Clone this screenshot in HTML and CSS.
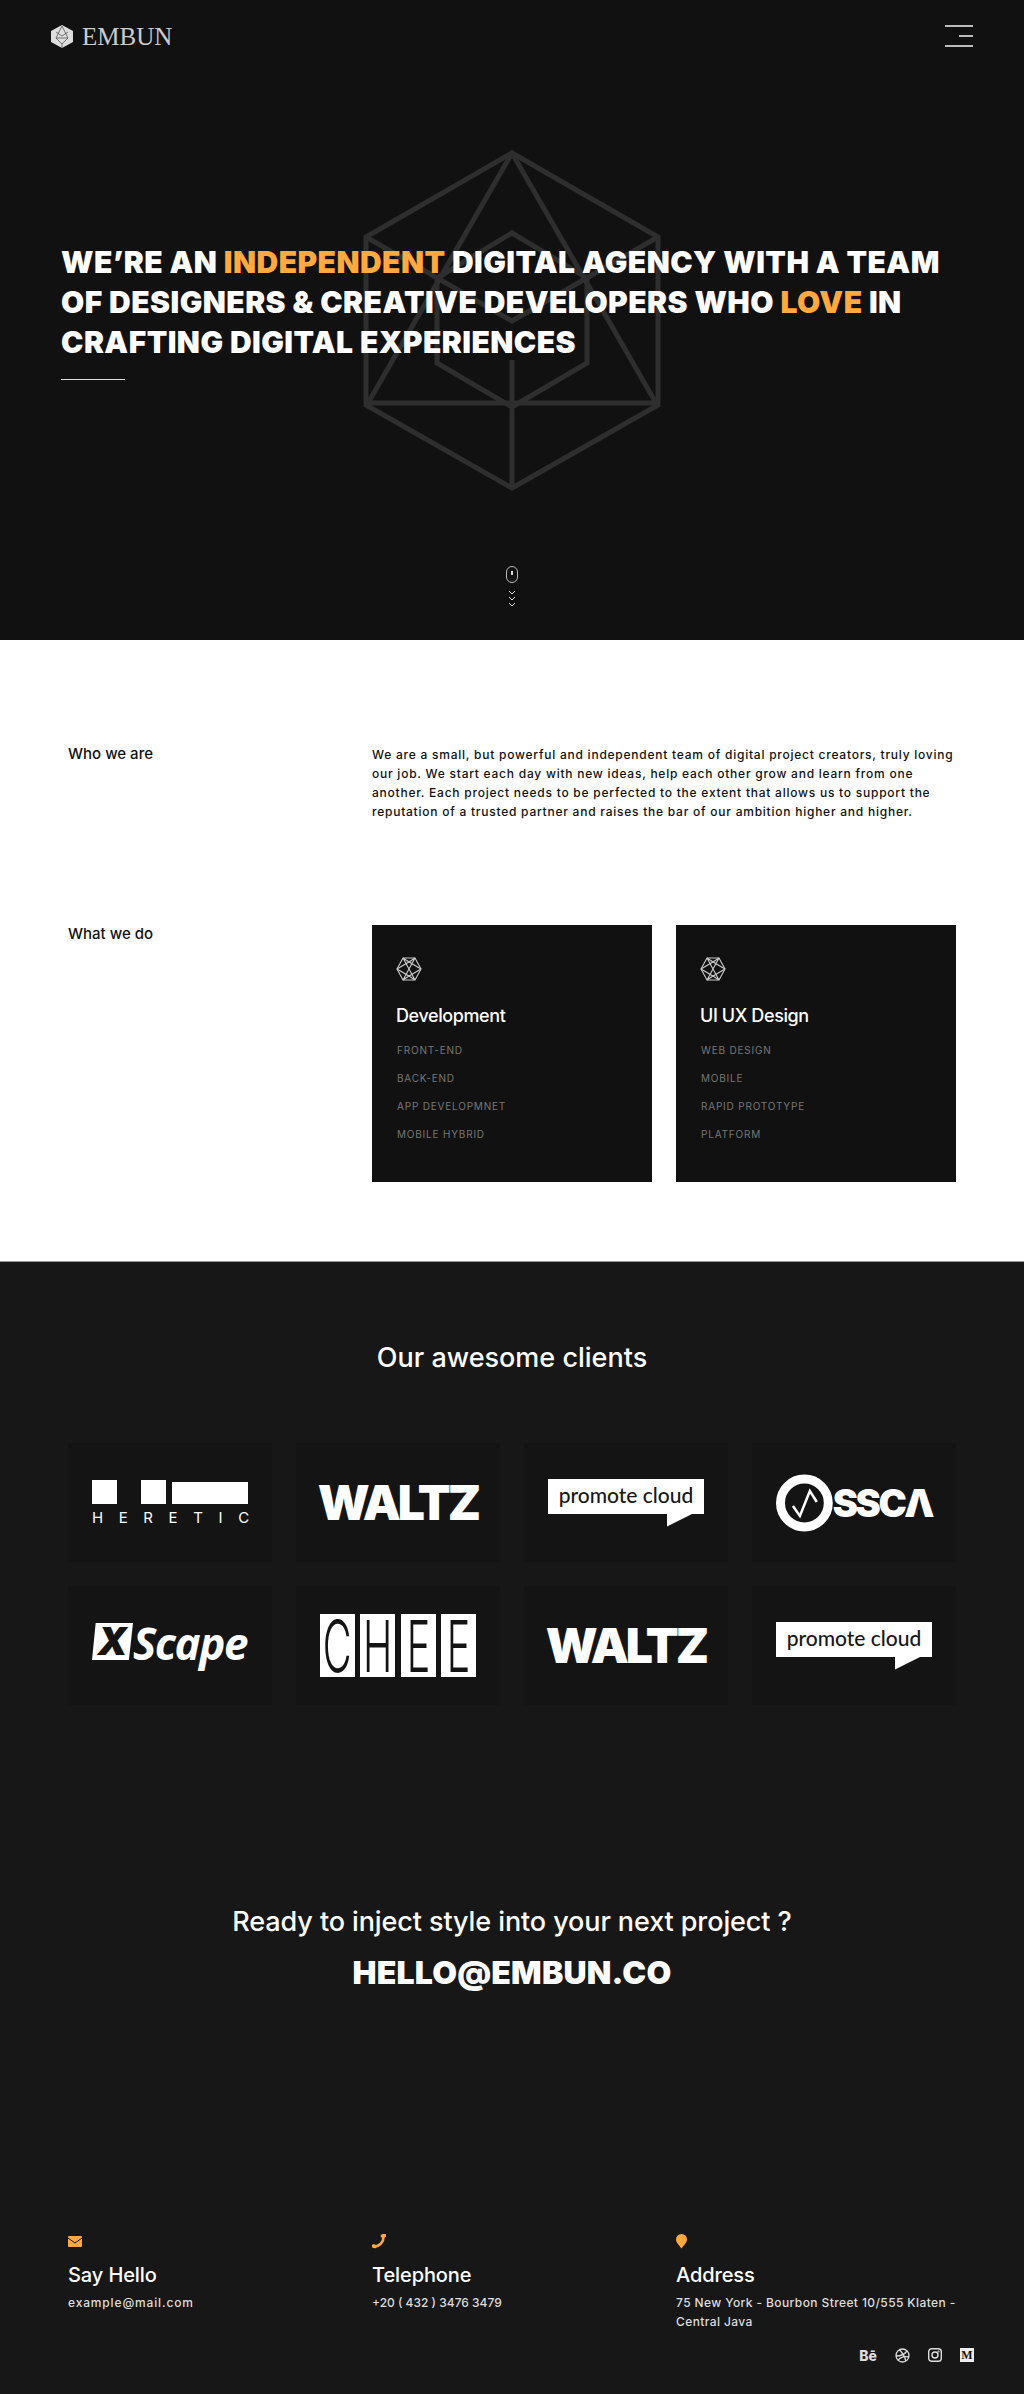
FILE: index.html
```html
<!DOCTYPE html>
<html lang="en">
<head>
    <meta charset="UTF-8">
    <meta name="viewport" content="width=device-width, initial-scale=1.0">
    <title>Embun</title>
    <link rel="stylesheet" href="styles.css">
</head>
<body>
    <section class="hero">
        <svg class="hero-mark" viewBox="0 0 298 343" fill="none" stroke="#2e2e2e" stroke-width="5">
            <path d="M149 4 295 88V256L149 339 3 256V88Z"/>
            <path d="M149 84 224 129V214L149 258 74 214V129Z"/>
            <path d="M149 4 5 254M149 4 293 254M3 254H295M149 211V339M3 88 149 172 295 88"/>
        </svg>
        <header class="topbar">
            <a class="brand">
                <svg class="brand-mark" viewBox="0 0 22 23">
                    <path d="M11 0 22 6V17L11 23 0 17V6Z" fill="#ddd"/>
                    <path d="M11 1 5 13H17ZM5 7 11 11 17 7M5 13 11 19 17 13M11 19V23" fill="none" stroke="#555" stroke-width=".8"/>
                </svg>
                <span class="brand-name">EMBUN</span>
            </a>
            <button class="menu-toggle" aria-label="Menu">
                <span></span><span class="short"></span><span></span>
            </button>
        </header>
        <h1 class="hero-title">WE’RE AN <em>INDEPENDENT</em> DIGITAL AGENCY WITH A TEAM OF DESIGNERS &amp; CREATIVE DEVELOPERS WHO <em>LOVE</em> IN CRAFTING DIGITAL EXPERIENCES</h1>
        <div class="hero-rule"></div>
        <div class="scroll-hint">
            <div class="mouse"><i></i></div>
            <svg class="chevrons" width="8" height="18" viewBox="0 0 8 18" fill="none" stroke="#ddd" stroke-width="1">
                <path d="M1 1 4 4 7 1M1 7 4 10 7 7M1 13 4 16 7 13"/>
            </svg>
        </div>
    </section>

    <section class="about">
        <div class="row who">
            <h4 class="row-label">Who we are</h4>
            <p class="who-text">We are a small, but powerful and independent team of digital project creators, truly loving our job. We start each day with new ideas, help each other grow and learn from one another. Each project needs to be perfected to the extent that allows us to support the reputation of a trusted partner and raises the bar of our ambition higher and higher.</p>
        </div>
        <div class="row what">
            <h4 class="row-label">What we do</h4>
            <div class="card">
                <svg class="card-icon" viewBox="0 0 26 24" fill="none" stroke="#ccc" stroke-width="1.1">
                    <path d="M1 12 7 1H19L25 12 19 23H7Z"/>
                    <path d="M7 1 19 23M19 1 7 23M1 12 13 5 25 12M1 12 13 19 25 12M7 1 13 5 19 1M7 23 13 19 19 23"/>
                </svg>
                <h3 class="card-title">Development</h3>
                <ul class="card-list">
                    <li>FRONT-END</li>
                    <li>BACK-END</li>
                    <li>APP DEVELOPMNET</li>
                    <li>MOBILE HYBRID</li>
                </ul>
            </div>
            <div class="card">
                <svg class="card-icon" viewBox="0 0 26 24" fill="none" stroke="#ccc" stroke-width="1.1">
                    <path d="M1 12 7 1H19L25 12 19 23H7Z"/>
                    <path d="M7 1 19 23M19 1 7 23M1 12 13 5 25 12M1 12 13 19 25 12M7 1 13 5 19 1M7 23 13 19 19 23"/>
                </svg>
                <h3 class="card-title">UI UX Design</h3>
                <ul class="card-list">
                    <li>WEB DESIGN</li>
                    <li>MOBILE</li>
                    <li>RAPID PROTOTYPE</li>
                    <li>PLATFORM</li>
                </ul>
            </div>
        </div>
    </section>

    <section class="dark">
        <h2 class="clients-title">Our awesome clients</h2>
        <div class="clients">
            <div class="tile">
                <div class="logo-heretic">
                    <div class="heretic-blocks"><i></i><i></i><i class="wide"></i></div>
                    <span>HERETIC</span>
                </div>
            </div>
            <div class="tile"><span class="logo-waltz">WALTZ</span></div>
            <div class="tile"><div class="logo-promote"><span>promote cloud</span></div></div>
            <div class="tile">
                <div class="logo-ossca">
                    <svg width="57" height="58" viewBox="0 0 57 58" fill="none" stroke="#fff">
                        <circle cx="28.5" cy="29" r="24" stroke-width="9"/>
                        <path d="M17 32 24 42 34 17 41 28" stroke-width="2.5"/>
                    </svg>
                    <span>SSCΛ</span>
                </div>
            </div>
            <div class="tile">
                <div class="logo-xscape"><span class="x-box">X</span><span class="x-word">Scape</span></div>
            </div>
            <div class="tile">
                <div class="logo-chee">
                    <span><i>C</i></span><span><i>H</i></span><span><i>E</i></span><span><i>E</i></span>
                </div>
            </div>
            <div class="tile"><span class="logo-waltz">WALTZ</span></div>
            <div class="tile"><div class="logo-promote"><span>promote cloud</span></div></div>
        </div>

        <div class="cta">
            <h2 class="cta-title">Ready to inject style into your next project ?</h2>
            <a class="cta-mail">HELLO@EMBUN.CO</a>
        </div>

        <footer class="contact">
            <div class="contact-item">
                <svg class="contact-icon" width="14" height="15" viewBox="0 0 14 15">
                    <rect y="2" width="14" height="11" rx="1" fill="#ffa93f"/>
                    <path d="M0 4 7 9 14 4" fill="none" stroke="#171717" stroke-width="1"/>
                </svg>
                <h3>Say Hello</h3>
                <p class="contact-mail">example@mail.com</p>
            </div>
            <div class="contact-item">
                <svg class="contact-icon" width="14" height="15" viewBox="0 0 14 15" fill="none" stroke="#ffa93f" stroke-linecap="round">
                    <path d="M11.5 3C11.5 8 8 12 3 12.5" stroke-width="2.6"/>
                    <path d="M10.5 2 12.5 1.5M1.5 12 3 12.5" stroke-width="3.6"/>
                </svg>
                <h3>Telephone</h3>
                <p class="contact-phone">+20 ( 432 ) 3476 3479</p>
            </div>
            <div class="contact-item">
                <svg class="contact-icon" width="11" height="15" viewBox="0 0 11 15">
                    <path d="M5.5 0A5.5 5.5 0 0 1 11 5.5C11 8.5 7.5 11.5 5.5 14.5 3.5 11.5 0 8.5 0 5.5A5.5 5.5 0 0 1 5.5 0Z" fill="#ffa93f"/>
                </svg>
                <h3>Address</h3>
                <p>75 New York - Bourbon Street 10/555 Klaten - Central Java</p>
            </div>
        </footer>
        <div class="social">
            <span class="social-be">Bē</span>
            <svg width="15" height="15" viewBox="0 0 15 15" fill="none" stroke="#ddd" stroke-width="1.3">
                <circle cx="7.5" cy="7.5" r="6.5"/>
                <path d="M4.5 1.8C7.5 5 10 9.5 10.8 13M1 8C5 8 9.5 6.5 12 3M3 12.5C5 9.5 8.5 8 14 9"/>
            </svg>
            <svg width="14" height="14" viewBox="0 0 14 14" fill="none" stroke="#ddd" stroke-width="1.4">
                <rect x=".7" y=".7" width="12.6" height="12.6" rx="3"/>
                <circle cx="7" cy="7" r="3"/>
                <circle cx="10.5" cy="3.5" r=".4"/>
            </svg>
            <span class="social-m">M</span>
        </div>
    </section>
</body>
</html>
```

FILE: styles.css
```css
* {
    box-sizing: border-box;
}

body {
    font-family: 'Inter', 'Open Sans', sans-serif;
    margin: 0;
    padding: 0;
    background-color: #171717;
}

h1, h2, h3, h4, p, ul {
    margin: 0;
    padding: 0;
}

/* hero */
.hero {
    position: relative;
    display: flex;
    flex-direction: column;
    height: 640px;
    padding: 25px 51px 32px 61px;
    background-color: #111;
    color: #fff;
}

.hero-mark {
    position: absolute;
    left: 363px;
    top: 149px;
    width: 298px;
    height: 343px;
}

.topbar {
    position: relative;
    display: flex;
    justify-content: space-between;
    align-items: flex-start;
    margin-left: -10px;
}

.brand {
    display: flex;
    align-items: center;
    gap: 9px;
    height: 23px;
}

.brand-mark {
    width: 22px;
    height: 23px;
}

.brand-name {
    font-family: 'Liberation Serif', serif;
    font-size: 25px;
    color: #ccc;
}

.menu-toggle {
    display: flex;
    flex-direction: column;
    align-items: flex-end;
    gap: 8px;
    width: 28px;
    padding: 0;
    background: none;
    border: none;
}

.menu-toggle span {
    display: block;
    width: 28px;
    height: 2px;
    background-color: #bbb;
}

.menu-toggle span.short {
    width: 14px;
}

.hero-title {
    position: relative;
    margin-top: 194px;
    font-size: 30px;
    font-weight: 900;
    line-height: 40px;
    letter-spacing: 0.45px;
    width: 900px;
}

.hero-title em {
    font-style: normal;
    color: #ffa93f;
}

.hero-rule {
    position: relative;
    width: 64px;
    height: 1px;
    margin-top: 17px;
    background-color: #ddd;
}

.scroll-hint {
    display: flex;
    flex-direction: column;
    align-items: center;
    gap: 7px;
    margin-top: auto;
    margin-left: -10px;
}

.mouse {
    display: flex;
    justify-content: center;
    width: 12px;
    height: 17px;
    padding-top: 4px;
    border: 1px solid #bbb;
    border-radius: 6px;
}

.mouse i {
    width: 2px;
    height: 4px;
    background-color: #ddd;
}

/* about */
.about {
    height: 621px;
    padding: 104px 68px 0;
    background-color: #fff;
    color: #111;
}

.row {
    display: grid;
    grid-template-columns: 280px 280px 280px;
    column-gap: 24px;
}

.row-label {
    font-size: 15px;
    font-weight: 500;
    line-height: 19px;
}

.who-text {
    grid-column: 2 / 4;
    font-size: 12px;
    font-weight: 500;
    line-height: 19px;
    letter-spacing: 0.76px;
    width: 586px;
    margin-top: 1px;
}

.what {
    margin-top: 104px;
}

.what .row-label {
    margin-top: -1px;
}

.card {
    height: 257px;
    padding: 32px 24px 0;
    background-color: #111;
    color: #fff;
}

.card-icon {
    display: block;
    width: 26px;
    height: 24px;
}

.card-title {
    margin-top: 23px;
    font-size: 18px;
    font-weight: 500;
    line-height: 24px;
    letter-spacing: -0.4px;
}

.card-list {
    list-style: none;
    margin-top: 8px;
}

.card-list li {
    padding-left: 1px;
    font-size: 10px;
    line-height: 28px;
    letter-spacing: 0.8px;
    color: #777;
}

/* clients */
.dark {
    height: 1133px;
    padding: 76px 68px 0;
    background-color: #171717;
    border-top: 1px solid #999;
    color: #fff;
}

.clients-title {
    font-size: 27px;
    font-weight: 500;
    line-height: 40px;
    text-align: center;
}

.clients {
    display: grid;
    grid-template-columns: repeat(4, 204px);
    grid-auto-rows: 119px;
    gap: 24px;
    margin-top: 65px;
}

.tile {
    display: flex;
    align-items: center;
    justify-content: center;
    background-color: #141414;
}

.logo-heretic {
    width: 156px;
}

.heretic-blocks {
    display: flex;
    align-items: flex-end;
}

.heretic-blocks i {
    width: 25px;
    height: 24px;
    margin-right: 24px;
    background-color: #fff;
}

.heretic-blocks i + i {
    margin-right: 6px;
}

.heretic-blocks i.wide {
    width: 76px;
    height: 22px;
    margin: 0;
}

.logo-heretic span {
    display: block;
    margin-top: 6px;
    font-size: 15px;
    line-height: 15px;
    letter-spacing: 15.6px;
    white-space: nowrap;
}

.logo-waltz {
    font-size: 48px;
    font-weight: 900;
    line-height: 36px;
    letter-spacing: -3px;
}

.logo-promote {
    position: relative;
    width: 156px;
    height: 35px;
    margin-bottom: 13px;
    background-color: #fff;
    color: #171717;
    text-align: center;
}

.logo-promote span {
    font-family: 'Lato', sans-serif;
    font-size: 21px;
    font-weight: 500;
    line-height: 32px;
    white-space: nowrap;
}

.logo-promote::after {
    content: "";
    position: absolute;
    left: 119px;
    top: 35px;
    width: 26px;
    height: 13px;
    background-color: #fff;
    clip-path: polygon(0 0, 100% 0, 0 100%);
}

.logo-ossca {
    display: flex;
    align-items: center;
    width: 156px;
}

.logo-ossca span {
    font-size: 38px;
    font-weight: 900;
    line-height: 40px;
    letter-spacing: -2.5px;
    white-space: nowrap;
}

.logo-xscape {
    display: flex;
    align-items: flex-start;
    width: 156px;
    height: 45px;
}

.x-box {
    width: 41px;
    height: 37px;
    background-color: #fff;
    color: #141414;
    font-size: 38px;
    font-weight: 900;
    font-style: italic;
    line-height: 37px;
    text-align: center;
    clip-path: polygon(9% 0, 100% 0, 90% 100%, 0 100%);
}

.x-word {
    font-family: 'Open Sans', sans-serif;
    font-size: 44px;
    font-weight: 700;
    font-style: italic;
    line-height: 40px;
    letter-spacing: -1.5px;
}

.logo-chee {
    display: flex;
    justify-content: space-between;
    width: 156px;
}

.logo-chee span {
    display: flex;
    justify-content: center;
    width: 35px;
    height: 63px;
    background-color: #fff;
    color: #141414;
}

.logo-chee i {
    display: block;
    font-size: 72px;
    font-style: normal;
    font-weight: 300;
    line-height: 63px;
    transform: scaleX(0.55);
}

/* call to action */
.cta {
    margin-top: 197px;
    text-align: center;
}

.cta-title {
    font-size: 27px;
    font-weight: 500;
    line-height: 40px;
    letter-spacing: -0.1px;
}

.cta-mail {
    display: block;
    margin-top: 11px;
    font-size: 32px;
    font-weight: 900;
    line-height: 40px;
    letter-spacing: 0.2px;
}

/* contact */
.contact {
    display: grid;
    grid-template-columns: 280px 280px 280px;
    column-gap: 24px;
    margin-top: 241px;
}

.contact-icon {
    display: block;
}

.contact-item h3 {
    margin-top: 11px;
    font-size: 20px;
    font-weight: 500;
    line-height: 30px;
    letter-spacing: -0.1px;
}

.contact-item p {
    margin-top: 3px;
    font-size: 12px;
    font-weight: 500;
    line-height: 19px;
    letter-spacing: 0.4px;
    color: #ddd;
}

.contact-item p.contact-mail {
    letter-spacing: 0.85px;
}

.contact-item p.contact-phone {
    letter-spacing: 0;
}

.social {
    display: flex;
    justify-content: flex-end;
    align-items: center;
    gap: 18px;
    margin-top: 16px;
    margin-right: -18px;
    height: 16px;
}

.social-be {
    font-size: 14px;
    font-weight: 800;
    color: #ddd;
}

.social-m {
    display: block;
    width: 14px;
    height: 14px;
    background-color: #eee;
    color: #111;
    font-family: 'Liberation Serif', serif;
    font-size: 12px;
    font-weight: 700;
    line-height: 14px;
    text-align: center;
}
```
